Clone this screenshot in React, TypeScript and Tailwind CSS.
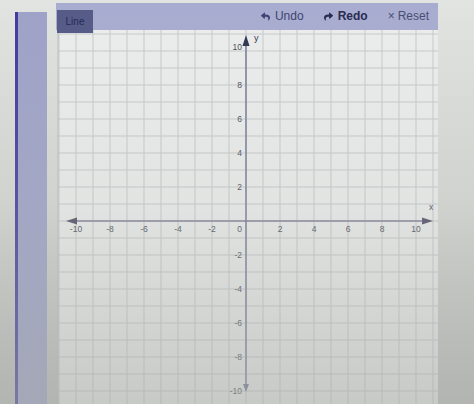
import { FaReply, FaShare } from "react-icons/fa";

const UNIT = 17;
const OX = 190;
const OY = 191;
const W = 382;
const H = 374;

function Grid() {
  const ks = Array.from({ length: 25 }, (_, i) => i - 12);
  const ticks = [-10, -8, -6, -4, -2, 2, 4, 6, 8, 10];

  return (
    <svg width={W} height={H} className="block">
      <rect x={2} y={0} width={W - 2} height={H} fill="#eceeed" />
      {ks.map((k) => {
        const x = OX + k * UNIT;
        return x > 2 && x < W ? (
          <line key={"v" + k} x1={x} y1={0} x2={x} y2={H} stroke="#c6c9cb" strokeWidth={1} />
        ) : null;
      })}
      {ks.map((k) => {
        const y = OY + k * UNIT;
        return y > 0 && y < H ? (
          <line key={"h" + k} x1={2} y1={y} x2={W} y2={y} stroke="#c6c9cb" strokeWidth={1} />
        ) : null;
      })}
      <line x1={2} y1={0} x2={2} y2={H} stroke="#b9bcbf" strokeWidth={1} />

      {/* axes */}
      <line x1={16} y1={OY} x2={370} y2={OY} stroke="#7d8094" strokeWidth={1.4} />
      <line x1={OX} y1={12} x2={OX} y2={356} stroke="#6f7390" strokeWidth={1.4} />
      <polygon points={`10,${OY} 21,${OY - 3.5} 21,${OY + 3.5}`} fill="#4b4e63" />
      <polygon points={`377,${OY} 366,${OY - 3.5} 366,${OY + 3.5}`} fill="#4b4e63" />
      <polygon points={`${OX},5 ${OX - 3.5},16 ${OX + 3.5},16`} fill="#2f3350" />
      <polygon points={`${OX},362 ${OX - 3},354 ${OX + 3},354`} fill="#6f7390" />

      <g fontFamily="Liberation Sans, Arial, sans-serif" fontSize={8.5} fill="#4a4d55">
        {ticks.map((t) => (
          <text key={"x" + t} x={OX + t * UNIT} y={OY + 11} textAnchor="middle">
            {t}
          </text>
        ))}
        {ticks.map((t) => (
          <text key={"y" + t} x={OX - 4} y={OY - t * UNIT + (t === 10 ? -1 : 3)} textAnchor="end">
            {t}
          </text>
        ))}
        <text x={OX - 4} y={OY + 11} textAnchor="end">
          0
        </text>
        <text x={OX + 8} y={11} fontSize={9} fill="#2f3350">
          y
        </text>
        <text x={373} y={180} fontSize={8.5}>
          x
        </text>
      </g>
    </svg>
  );
}

export default function App() {
  return (
    <div className="relative flex h-[404px] w-[474px] overflow-hidden bg-linear-to-b from-[#e2e4e1] via-[#d6d8d4] to-[#bcbfba] font-['Liberation_Sans',Arial,sans-serif]">
      <div className="ml-[15px] mt-[12px] w-[32px] self-stretch border-l-[3px] border-[#3f3a9e] bg-[#9ea2c8]" />

      <div className="ml-[9px] mt-[3px] flex w-[382px] flex-col">
        <div className="flex h-[27px] items-start bg-[#a8acd0] text-[12px]">
          <div className="relative z-10 ml-px mt-[7px] flex h-[23px] w-[36px] items-center justify-center bg-[#565b88] text-[10px] text-[#262b56]">
            Line
          </div>
          <div className="ml-auto mr-[9px] mt-[4px] flex items-center gap-[20px] text-[#3d4272]">
            <span className="flex items-center gap-[5px]">
              <FaReply className="h-[9px] w-[9px]" />
              Undo
            </span>
            <span className="flex items-center gap-[5px] font-bold text-[#262a4f]">
              <FaShare className="h-[9px] w-[9px]" />
              Redo
            </span>
            <span className="flex items-center gap-[3px] text-[#474c73]">
              <span className="text-[12px] leading-none">×</span>
              Reset
            </span>
          </div>
        </div>
        <Grid />
      </div>

      <div className="pointer-events-none absolute inset-0 bg-linear-to-b from-transparent via-[#b9bcb8]/20 to-[#a9aca8]/55" />
    </div>
  );
}
